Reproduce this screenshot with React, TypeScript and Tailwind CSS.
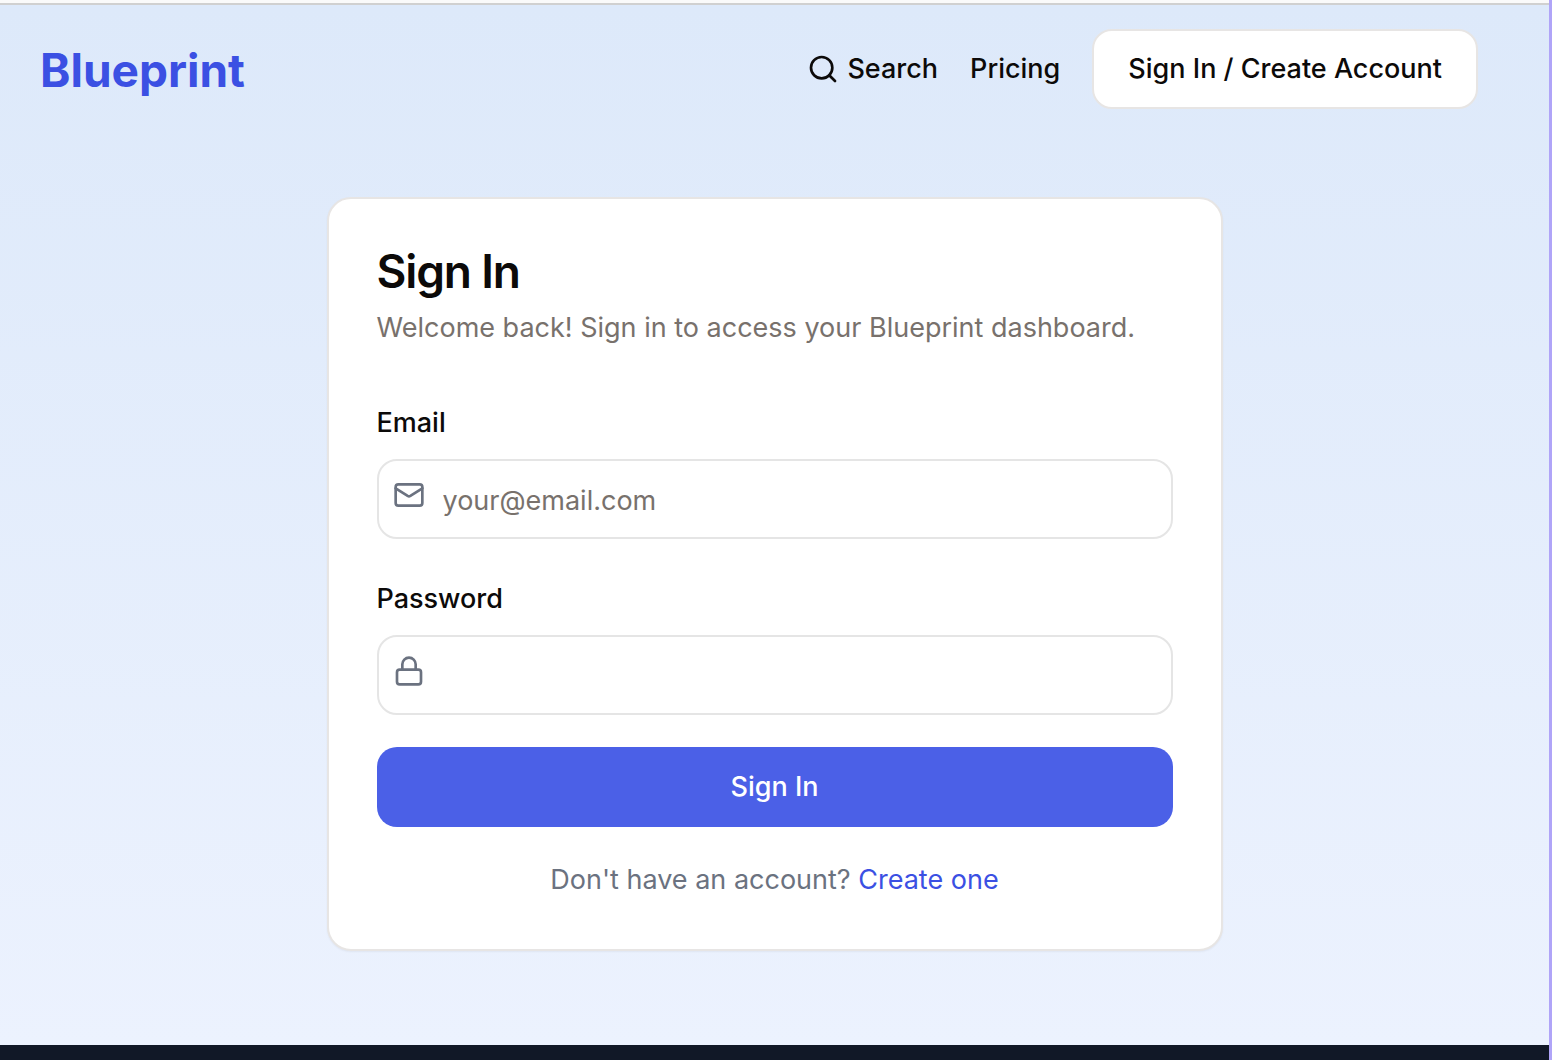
import React from "react";
import { Search, Mail, Lock } from "lucide-react";

export default function App() {
  return (
    <div className="flex min-h-screen bg-[#b0a4f8] pr-[3px] font-['Inter',sans-serif] text-[27px] leading-[42px] text-[#0c0a09]">
      <div className="flex min-w-0 flex-1 flex-col border-t-3 border-[#fafafa]">
        <div className="flex flex-1 flex-col border-t-2 border-[#d0d0d0] bg-linear-to-b from-[#dde9fa] to-[#ecf2fe]">
          <header className="flex items-center justify-between pt-6 pr-[71px] pl-10">
            <a href="#" className="pt-0.5 text-[46px] leading-[56px] font-bold text-[#3b50e3]">Blueprint</a>
            <nav className="flex items-center gap-8 font-medium">
              <a href="#" className="flex items-center gap-2"><Search size={32} />Search</a>
              <a href="#">Pricing</a>
              <button className="h-20 rounded-[20px] border-2 border-[#e7e5e4] bg-white px-[34px]">Sign In / Create Account</button>
            </nav>
          </header>
          <main className="flex flex-1 justify-center pt-[88px]">
            <form className="h-fit w-[896px] rounded-3xl border-2 border-[#e7e5e4] bg-white p-12 shadow-xs">
              <h1 className="text-[46px] leading-12 font-semibold tracking-tight">Sign In</h1>
              <p className="mt-3 text-[#78716c]">Welcome back! Sign in to access your Blueprint dashboard.</p>
              <label htmlFor="email" className="mt-[60px] block font-medium leading-7">Email</label>
              <div className="relative mt-[22px]">
                <Mail size={32} className="absolute top-5 left-4 text-[#6b7280]" />
                <input id="email" type="email" placeholder="your@email.com" className="h-20 w-full rounded-[20px] border-2 border-[#e5e5e5] pt-0.5 pr-6 pl-16 placeholder:text-[#78716c]" />
              </div>
              <label htmlFor="password" className="mt-[46px] block font-medium leading-7">Password</label>
              <div className="relative mt-[22px]">
                <Lock size={32} className="absolute top-5 left-4 text-[#6b7280]" />
                <input id="password" type="password" className="h-20 w-full rounded-[20px] border-2 border-[#e5e5e5] pr-6 pl-16" />
              </div>
              <button className="mt-8 h-20 w-full rounded-[20px] bg-[#4b60e7] font-medium text-white">Sign In</button>
              <p className="mt-8 text-center text-[#6b7280]">Don't have an account? <a href="#" className="text-[#3b50e3]">Create one</a></p>
            </form>
          </main>
        </div>
        <footer className="h-[15px] bg-[#111827]" />
      </div>
    </div>
  );
}
